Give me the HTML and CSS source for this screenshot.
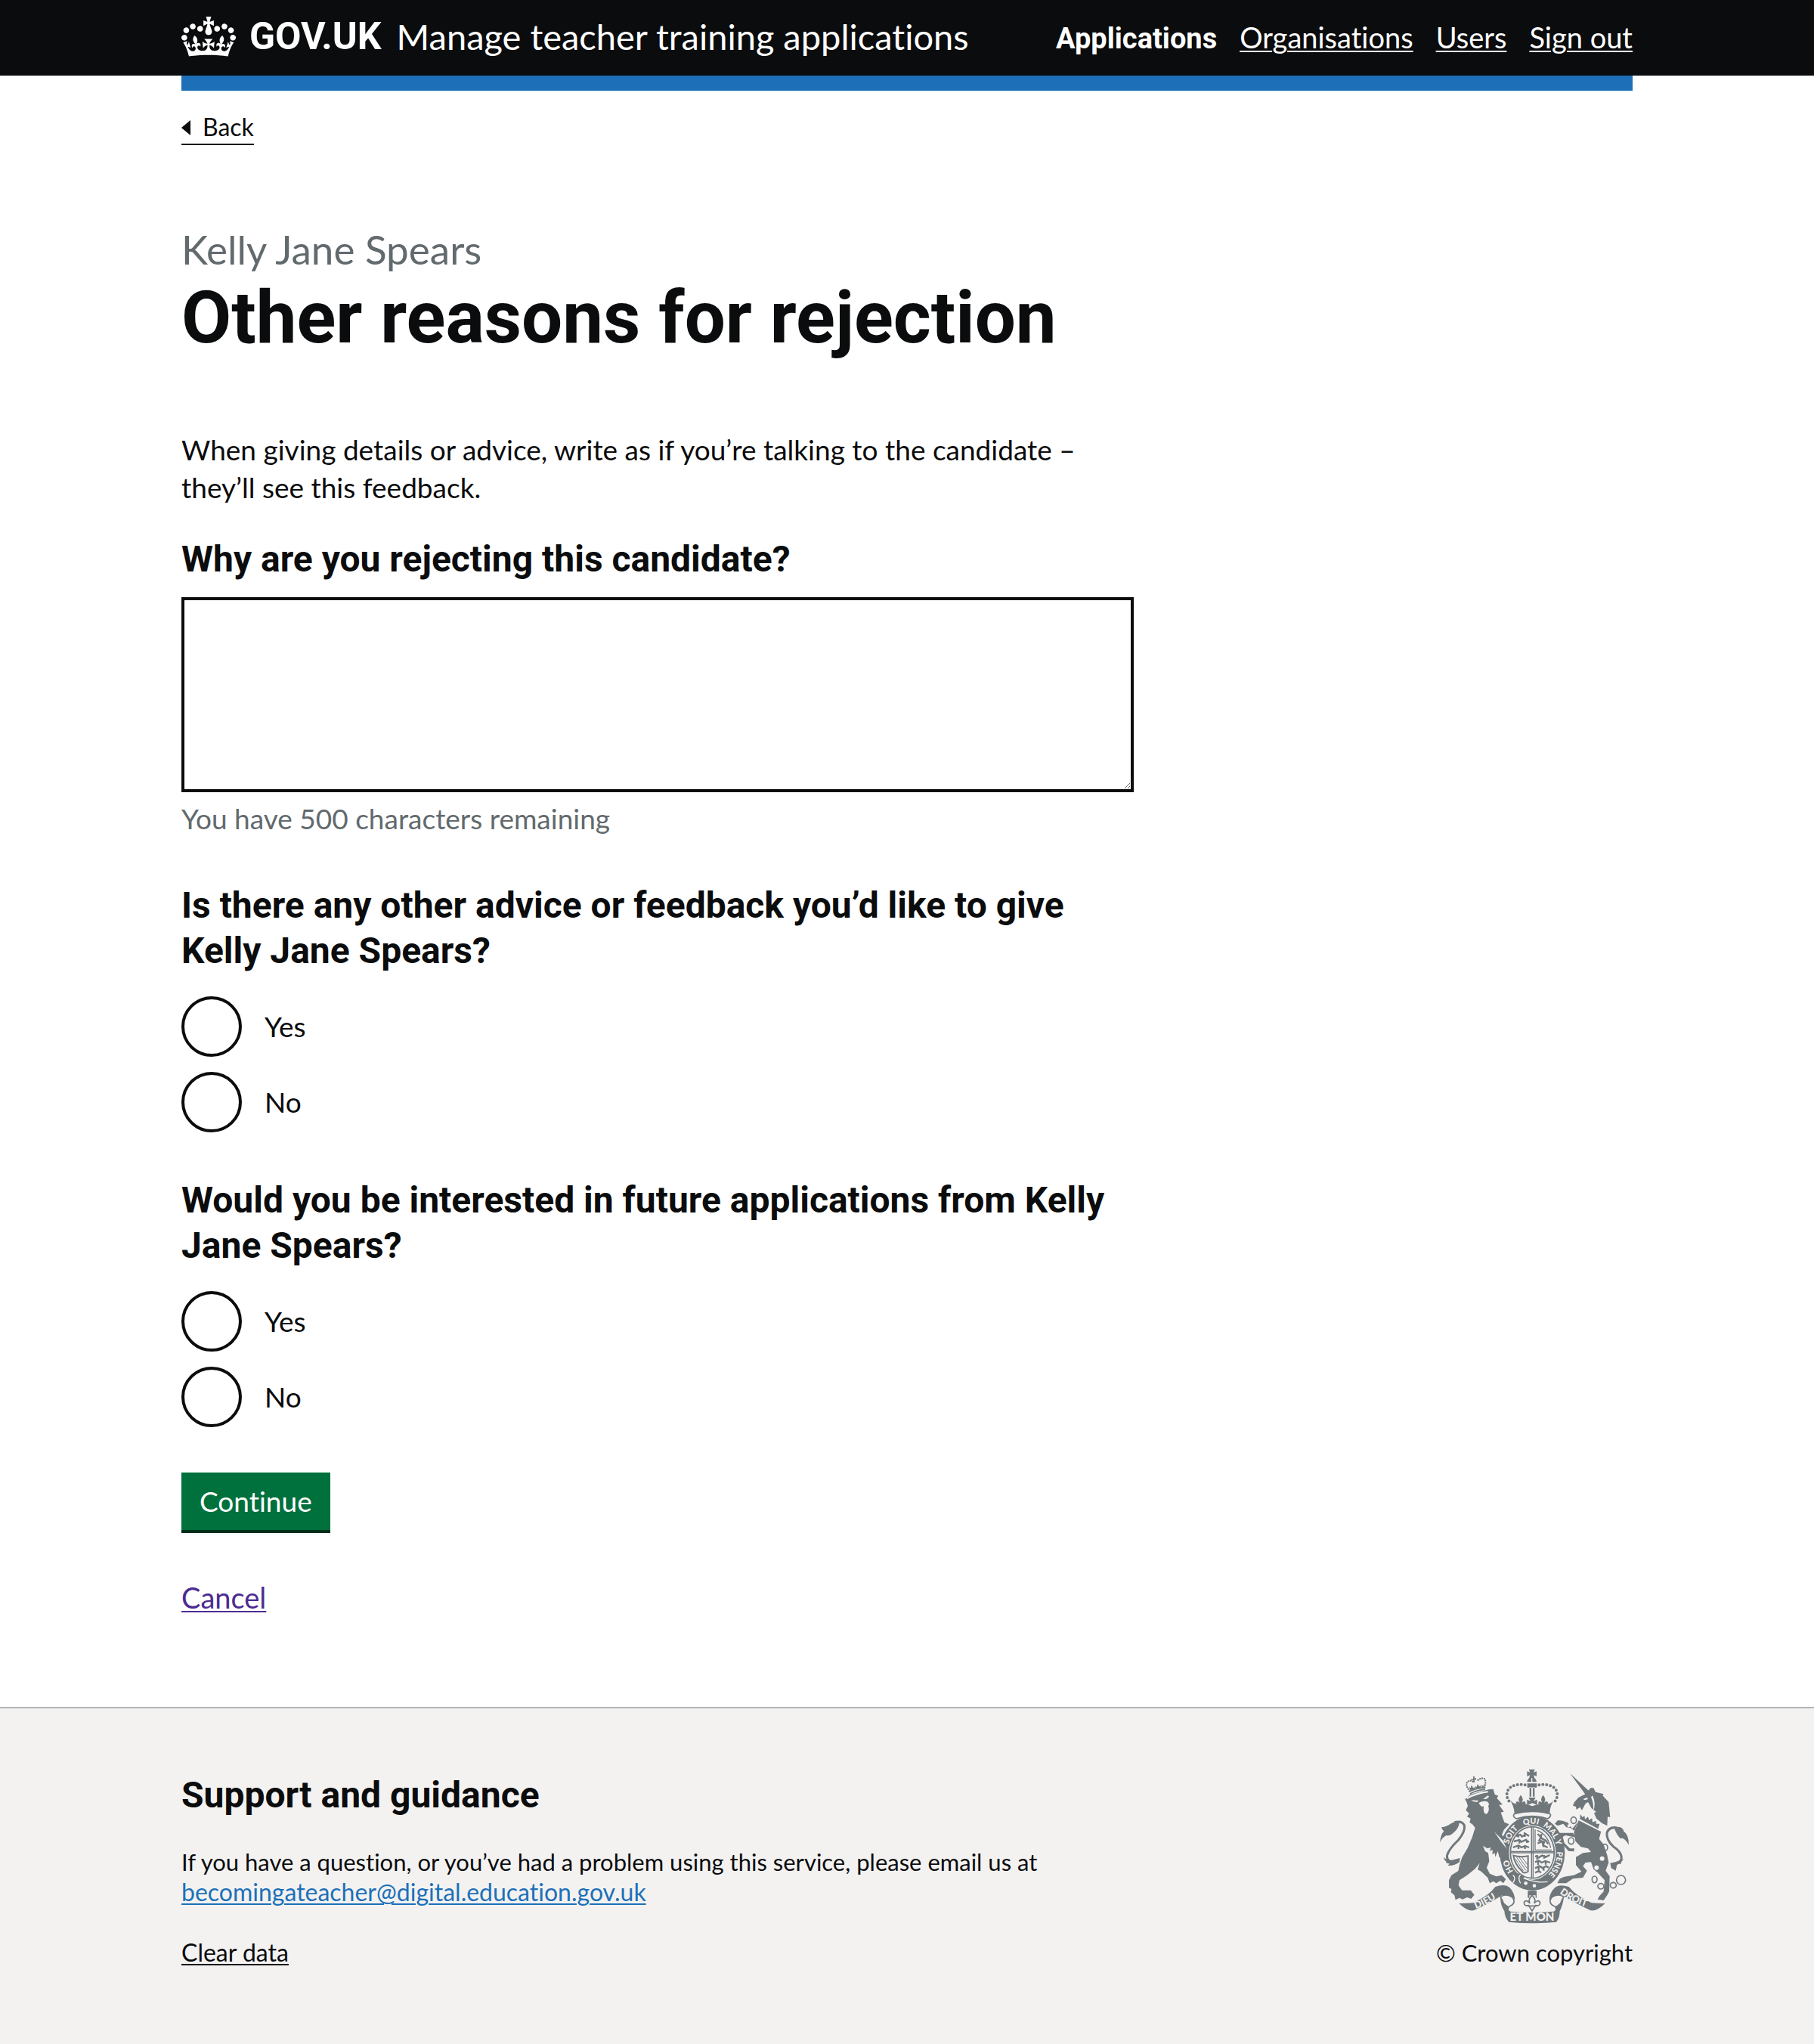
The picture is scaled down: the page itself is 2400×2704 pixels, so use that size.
FILE: index.html
```html
<!DOCTYPE html>
<html lang="en">
<head>
  <meta charset="utf-8">
  <meta name="viewport" content="width=device-width, initial-scale=1">
  <title>Other reasons for rejection - Manage teacher training applications - GOV.UK</title>
  <link rel="stylesheet" href="styles.css">
</head>
<body>
  <header class="header">
    <div class="container header-inner">
      <div class="brand">
        <a class="brand-logo" href="#">
          <svg class="brand-crown" viewBox="0 0 132 97" aria-hidden="true">
            <path fill="currentColor" fill-rule="evenodd" d="M25 30.2c3.5 1.5 7.7-.2 9.1-3.7 1.5-3.6-.2-7.8-3.9-9.2-3.6-1.4-7.6.3-9.1 3.9-1.4 3.5.3 7.5 3.9 9zM9 39.5c3.6 1.5 7.8-.2 9.2-3.7 1.5-3.6-.2-7.8-3.9-9.1-3.6-1.5-7.6.2-9.1 3.8-1.4 3.5.3 7.5 3.8 9zM4.4 57.2c3.5 1.5 7.7-.2 9.1-3.8 1.5-3.6-.2-7.7-3.9-9.1-3.5-1.5-7.6.3-9.1 3.8-1.4 3.5.3 7.6 3.9 9.1zm38.3-21.4c3.5 1.5 7.7-.2 9.1-3.8 1.5-3.6-.2-7.7-3.9-9.1-3.6-1.5-7.6.3-9.1 3.8-1.3 3.6.4 7.7 3.9 9.1zm64.4-5.6c-3.6 1.5-7.8-.2-9.1-3.7-1.5-3.6.2-7.8 3.8-9.2 3.6-1.4 7.7.3 9.2 3.9 1.3 3.5-.4 7.5-3.9 9zm15.9 9.3c-3.6 1.5-7.7-.2-9.1-3.7-1.5-3.6.2-7.8 3.7-9.1 3.6-1.5 7.7.2 9.2 3.8 1.5 3.5-.3 7.5-3.8 9zm4.7 17.7c-3.6 1.5-7.8-.2-9.2-3.8-1.5-3.6.2-7.7 3.9-9.1 3.6-1.5 7.7.3 9.2 3.8 1.3 3.5-.4 7.6-3.9 9.1zM89.3 35.8c-3.6 1.5-7.8-.2-9.2-3.8-1.4-3.6.2-7.7 3.9-9.1 3.6-1.5 7.7.3 9.2 3.8 1.4 3.6-.3 7.7-3.9 9.1zM69.7 17.7l8.9 4.7V9.3l-8.9 2.8c-.2-.3-.5-.6-.9-.9L72.4 0H59.6l3.5 11.2c-.3.3-.6.5-.9.9l-8.8-2.8v13.1l8.8-4.7c.3.3.6.7.9.9l-5 15.4v.1c-.2.8-.4 1.6-.4 2.4 0 4.1 3.1 7.5 7 8.1h.2c.3 0 .7.1 1 .1.4 0 .7 0 1-.1h.2c4-.6 7.1-4.1 7.1-8.1 0-.8-.1-1.7-.4-2.4V34l-5.1-15.4c.4-.2.7-.6 1-.9zM66 92.8c16.9 0 32.8 1.1 47.1 3.2 4-16.9 8.9-26.7 14-33.5l-9.6-3.4c1 4.9 1.1 7.2 0 10.2-1.5-1.4-3-4.3-4.2-8.7L108.6 76c2.8-2 5-3.2 7.5-3.3-4.4 9.4-10 11.9-13.6 11.2-4.3-.8-6.3-4.6-5.6-7.9 1-4.7 5.7-5.9 8-.5 4.3-8.7-3-11.4-7.6-8.8 7.1-7.2 7.9-13.5 2.1-21.1-8 6.1-8.1 12.3-4.5 20.8-4.7-5.4-12.1-2.5-9.5 6.2 3.4-5.2 7.9-2 7.2 3.1-.6 4.3-6.4 7.8-13.5 7.2-10.3-.9-10.9-8-11.2-13.8 2.5-.5 7.1 1.8 11 7.3L80.2 60c-4.1 4.4-8 5.3-12.3 5.4 1.4-4.4 8-11.6 8-11.6H55.5s6.4 7.2 7.9 11.6c-4.2-.1-8-1-12.3-5.4l1.4 16.4c3.9-5.5 8.5-7.7 10.9-7.3-.3 5.8-.9 12.8-11.1 13.8-7.2.6-12.9-2.9-13.5-7.2-.7-5 3.8-8.3 7.1-3.1 2.7-8.7-4.6-11.6-9.4-6.2 3.7-8.5 3.6-14.7-4.6-20.8-5.8 7.6-5 13.9 2.2 21.1-4.7-2.6-11.9.1-7.7 8.8 2.3-5.5 7.1-4.2 8.1.5.7 3.3-1.3 7.1-5.7 7.9-3.5.7-9-1.8-13.5-11.2 2.5.1 4.7 1.3 7.5 3.3l-4.7-15.4c-1.2 4.4-2.7 7.2-4.3 8.7-1.1-3-.9-5.3 0-10.2l-9.5 3.4c5 6.9 9.9 16.7 14 33.5 14.8-2.1 30.8-3.2 47.7-3.2z"/>
          </svg>
          <span class="brand-name">GOV.UK</span>
        </a>
        <a class="brand-service" href="#">Manage teacher training applications</a>
      </div>
      <nav class="nav" aria-label="Main">
        <a class="nav-link nav-link-current" href="#" aria-current="page">Applications</a>
        <a class="nav-link" href="#">Organisations</a>
        <a class="nav-link" href="#">Users</a>
        <a class="nav-link" href="#">Sign out</a>
      </nav>
    </div>
  </header>

  <div class="container">
    <div class="header-bar"></div>
    <a class="back-link" href="#">
      <svg class="back-arrow" viewBox="0 0 12 20" aria-hidden="true"><path fill="currentColor" d="M12 0v20L0 10z"/></svg>
      Back
    </a>

    <main class="main">
      <h1 class="title">
        <span class="title-caption">Kelly Jane Spears</span>
        Other reasons for rejection
      </h1>
      <p class="intro">When giving details or advice, write as if you’re talking to the candidate – they’ll see this feedback.</p>

      <form class="form">
        <div class="group">
          <label class="heading" for="reason">Why are you rejecting this candidate?</label>
          <textarea class="textarea" id="reason" name="reason" aria-describedby="reason-count"></textarea>
          <p class="hint" id="reason-count">You have 500 characters remaining</p>
        </div>

        <fieldset class="group">
          <legend class="heading heading-legend">Is there any other advice or feedback you’d like to give Kelly Jane Spears?</legend>
          <div class="radios">
            <div class="radio-item">
              <input class="radio" type="radio" id="advice-yes" name="advice" value="yes">
              <label class="radio-label" for="advice-yes">Yes</label>
            </div>
            <div class="radio-item">
              <input class="radio" type="radio" id="advice-no" name="advice" value="no">
              <label class="radio-label" for="advice-no">No</label>
            </div>
          </div>
        </fieldset>

        <fieldset class="group">
          <legend class="heading heading-legend">Would you be interested in future applications from Kelly Jane Spears?</legend>
          <div class="radios">
            <div class="radio-item">
              <input class="radio" type="radio" id="future-yes" name="future" value="yes">
              <label class="radio-label" for="future-yes">Yes</label>
            </div>
            <div class="radio-item">
              <input class="radio" type="radio" id="future-no" name="future" value="no">
              <label class="radio-label" for="future-no">No</label>
            </div>
          </div>
        </fieldset>

        <button class="button" type="button">Continue</button>
        <a class="cancel" href="#">Cancel</a>
      </form>
    </main>
  </div>

  <footer class="footer">
    <div class="container footer-inner">
      <div class="footer-support">
        <h2 class="heading footer-heading">Support and guidance</h2>
        <p class="footer-text">If you have a question, or you’ve had a problem using this service, please email us at <br><a class="footer-email" href="mailto:becomingateacher@digital.education.gov.uk">becomingateacher@digital.education.gov.uk</a></p>
        <a class="footer-clear" href="#">Clear data</a>
      </div>
      <a class="copyright" href="#">
        <svg class="crest" viewBox="69 58 756 615" aria-hidden="true">
          <defs>
            <path id="garter" d="M439 504A98 114 0 0 1 439 276A98 114 0 0 1 439 504"/>
            <path id="dieu" d="M212 615Q268 594 334 546"/>
            <path id="droit" d="M544 549Q606 597 690 616"/>
            <path id="fleur" d="M0-26Q14-10 4 4Q18-8 20 8L10 12H-10L-20 8Q-18-8-4 4Q-14-10 0-26z"/>
          </defs>
          <g class="crest-ink">
            <!-- lion -->
            <path d="M172 178L192 160L265 140L284 138L290 160L304 165L298 174L321 200L307 201L326 228L314 231L328 270L347 278L326 300L318 320L345 350L350 378L344 414L330 418L320 412L308 410L302 385L292 408L290 392L280 398L282 380L270 384L274 370L260 374L243 363L252 385L264 392L268 425L258 450L270 474L296 485L318 480L334 496L324 512L312 502L296 512L284 504L270 512L262 490L236 465L222 458L230 432L212 455L180 480L150 500L146 520L160 540L195 540L209 558L196 574L180 568L162 576L150 570L134 578L130 560L116 548L118 535L108 530L108 500L118 480L145 463L150 440L160 410L182 372L200 330L212 292L203 280L190 270L194 255L180 248L188 235L175 222L183 205L178 190z"/>
            <path d="M72 350Q76 315 88 306Q80 298 78 290Q102 286 114 276Q130 266 150 270Q146 295 128 310Q112 326 98 322Q82 330 72 350zM88 408Q96 420 120 420L152 412L150 428Q130 444 104 442L110 434Q92 432 98 426Q88 420 88 408z"/>
            <path class="crest-line" stroke-width="9" d="M130 270Q160 262 169 282Q174 305 146 340Q108 376 101 400Q98 416 110 424"/>
            <path class="crest-line" stroke-width="5" d="M192 157Q218 142 252 140M188 149Q216 134 252 133"/>
            <path class="crest-line crest-beads-small" d="M190 146Q172 122 180 112Q192 98 206 112M250 132Q256 108 250 98Q236 90 220 106"/>
            <path d="M204 88h6l-1 8 7-2v8l-7-1 2 10h-8l1-9-7 3v-8l7 2zM192 144l-4-14 6 4 4-12 6 12 6-4 2 12zM214 138l-2-12 6 4 4-12 6 10 6-4 2 12zM238 134v-12l6 4 4-8v16z"/>
            <!-- unicorn -->
            <path d="M588 75L670 152L650 160zM650 158L670 134L682 134L690 150L722 158L718 164L742 190L748 250L738 248L736 284L716 274L694 256L684 234L692 228L674 215L660 190L650 196L636 222L628 210L614 220L612 208L600 204L606 190L622 172z"/>
            <path d="M624 260L712 306L704 336L722 358L736 400L742 430L730 462L746 484L744 545L736 560L722 580L698 576L706 562L722 545L726 500L698 470L682 456L672 428L650 430L640 444L656 462L640 490L600 494L574 512L538 512L548 494L566 486L604 480L634 466L612 440L612 408L640 392L672 388L660 374L632 368L610 345L604 310z"/>
            <path d="M618 270L606 304L590 292L574 290L562 276L540 284L528 276L540 262L560 264L580 272L598 296zM612 330L570 322L560 328L566 352L588 374L606 374L604 386L582 384L562 360L546 322L540 312L600 312z"/>
            <path d="M822 360Q804 328 788 334Q772 318 764 292L784 288Q800 292 802 306Q822 318 822 360zM802 416Q790 428 790 436L776 434L770 462L752 452L748 432L768 428z"/>
            <path class="crest-line" stroke-width="9" d="M776 292Q744 286 735 312Q732 340 760 366Q792 386 793 410Q794 424 766 440"/>
            <!-- crown -->
            <path d="M425 60h24l-5 12 12-4v20l-12-5 4 12H426l4-12-12 5V68l12 4zM418 110Q420 94 435 92V110zM439 92Q454 94 456 110H439zM418 116H458Q456 132 438 132T418 116z"/>
            <path class="crest-line crest-beads" d="M424 127C396 112 338 120 338 160Q338 178 350 190M452 127C480 112 538 120 538 160Q538 178 526 190"/>
            <path d="M428 134h7v34h-7zM441 134h7v34h-7zM424 172H452L444 186L458 180V202L440 194L418 202V180L432 186z"/>
            <path d="M350 182Q366 200 382 198L376 190Q394 200 400 196Q412 196 438 206Q466 196 480 196L500 190L494 198Q514 198 524 182Q508 210 508 234Q440 222 368 234Q366 205 350 182z"/>
            <use href="#fleur" x="393" y="188"/><use href="#fleur" x="482" y="188"/>
            <!-- garter and shield -->
            <ellipse cx="439" cy="392" rx="129" ry="148"/>
            <path class="crest-pale" stroke-width="5" d="M368 236Q438 218 508 236Q518 244 500 256Q438 236 376 256Q358 248 368 236z"/>
            <ellipse class="crest-cut" cx="439" cy="390" rx="93" ry="108"/>
            <ellipse class="crest-line" stroke-width="5" cx="439" cy="390" rx="87" ry="102"/>
            <path class="crest-line" stroke-width="4" d="M436 288V490M442 288V490M352 386H526M352 391H526M450 298V380H516M458 302Q500 318 512 372"/>
            <path class="crest-line" stroke-width="7" d="M374 324l18-5 6 8 16-10 12 8M366 346l22-6 8 8 16-8 14 8M362 370l22-8 12 8 14-6 16 6M380 312l4 18M408 310l2 18M388 338v16M414 336l4 16M384 360v16M410 362v14M460 316l14 14-8 12 20 6-4 14 18 8M476 316l-4 16 20 10 10 14M460 354l18-8 6 22M450 404l14 6 14-8 14 6 16-8M450 428l14-6 12 8 14-6 20 6M450 452l18-8 12 8 14-8 10 6M450 470l14-6 10 6M458 400v18M486 400v14M462 424v16M492 424v14M464 446v16M484 446v16"/>
            <path class="crest-line" stroke-width="6" d="M364 402Q390 410 422 404V466Q404 476 398 464Q368 436 364 402z"/>
            <path class="crest-line" stroke-width="3" d="M376 408L414 462M386 408L418 452M397 408L420 438M372 416L404 464"/>
            <path d="M362 482Q374 468 390 476Q408 480 408 496Q450 512 508 514Q468 548 414 536L392 512Q374 526 364 508Q374 500 362 482z"/>
            <path class="crest-line crest-line-cut" stroke-width="4" d="M362 480Q376 490 362 510M392 478Q380 490 392 512M404 492Q450 512 500 506"/>
            <circle class="crest-cut" cx="413" cy="512" r="7"/><circle class="crest-cut" cx="447" cy="522" r="7"/>
            <!-- pendant -->
            <path d="M421 542H456V570H452V560H427V570H421z"/>
            <path class="crest-line" stroke-width="5" d="M438 560Q456 578 446 592Q462 574 470 588Q470 604 452 600L438 622L424 600Q406 604 406 588Q414 574 430 592Q420 578 438 560zM420 602H456"/>
            <!-- ribbon -->
            <path d="M148 592Q178 592 204 590Q268 560 292 526Q330 512 350 530Q368 550 370 578Q350 556 318 560Q270 592 206 620Q180 624 148 592zM728 592Q700 592 674 590Q610 560 584 526Q546 514 528 530Q508 550 506 578Q530 556 560 560Q610 592 670 620Q696 624 728 592z"/>
            <path class="crest-pale" stroke-width="5" d="M312 566Q336 550 360 568Q376 590 352 602Q334 610 340 624L328 616Q328 590 312 566zM564 566Q540 550 516 568Q500 590 524 602Q542 610 536 624L548 616Q548 590 564 566z"/>
            <path d="M312 568Q320 590 348 606Q340 620 352 624Q438 632 524 624Q536 620 528 606Q556 590 564 568Q560 600 548 622Q548 650 534 666Q438 676 346 666Q330 650 328 622Q312 600 312 568z"/>
            <!-- chain -->
            <path class="crest-line" stroke-width="5" d="M592 262a11 13 0 1 0 22 0a11 13 0 1 0-22 0M582 344a11 13 0 1 0 22 0a11 13 0 1 0-22 0M714 370a12 13 0 1 0 24 0a12 13 0 1 0-24 0M676 497a10 13 0 1 0 20 0a10 13 0 1 0-20 0M699 524a12 11 0 1 0 24 0a12 11 0 1 0-24 0M748 520a12 11 0 1 0 24 0a12 11 0 1 0-24 0M773 499a18 18 0 1 0 36 0a18 18 0 1 0-36 0"/>
          </g>
          <g class="crest-cut">
            <path d="M196 182L226 184L220 190L206 188zM244 178L262 164L268 168L256 178zM226 194Q240 182 260 188Q272 200 264 204Q272 226 256 238Q242 234 246 206Q238 212 232 202zM176 172Q220 150 262 146L264 152Q220 158 180 178z"/>
            <path d="M640 178l16-6 4 6-12 4zM678 164Q694 200 680 226Q684 196 672 170z"/>
            <path d="M628 232L726 286L710 306L622 262z"/>
            <circle cx="716" cy="414" r="9"/><circle cx="694" cy="450" r="9"/><circle cx="584" cy="284" r="6"/>
            <path d="M288 308L322 342L338 376L314 346z"/>
          </g>
          <g class="crest-ink">
            <path d="M628 256l2-18 8 12 8-6 2 14 12-10 4 14 12-8 2 16 14-6 0 12 14 0-6 20-74-40z"/>
          </g>
          <g class="crest-text">
            <text font-size="32" text-anchor="middle"><textPath href="#garter" startOffset="113">HO</textPath></text>
            <text font-size="32" text-anchor="middle"><textPath href="#garter" startOffset="236">SOIT</textPath></text>
            <text font-size="32" text-anchor="middle"><textPath href="#garter" startOffset="328">QUI</textPath></text>
            <text font-size="32" text-anchor="middle"><textPath href="#garter" startOffset="424">MAL Y</textPath></text>
            <text font-size="32" text-anchor="middle"><textPath href="#garter" startOffset="546">PENSE</textPath></text>
            <text font-size="38"><textPath href="#dieu" startOffset="4">DIEU</textPath></text>
            <text font-size="38"><textPath href="#droit" startOffset="4">DROIT</textPath></text>
            <text font-size="45" text-anchor="middle" x="438" y="662">ET MON</text>
          </g>
        </svg>
        <span>© Crown copyright</span>
      </a>
    </div>
  </footer>
</body>
</html>
```
FILE: styles.css
```css
:root {
  --black: #0b0c0d;
  --blue: #1d70b8;
  --grey: #626a6e;
  --footer-grey: #f3f2f1;
  --crest: #6f777b;
  --bold-font: Roboto, "Liberation Sans", sans-serif;
}

* {
  box-sizing: border-box;
}

body {
  display: flex;
  flex-direction: column;
  min-height: 100vh;
  margin: 0;
  background: #fff;
  color: var(--black);
  font-family: Lato, "Liberation Sans", sans-serif;
  font-size: 37px;
  line-height: 50px;
  font-variant-ligatures: none;
}

a {
  color: inherit;
  text-decoration-thickness: 2px;
  text-underline-offset: 3px;
}

.container {
  width: 80%;
  max-width: 1920px;
  margin: 0 auto;
}

/* Header */
.header {
  background: var(--black);
  color: #fff;
}

.header-inner {
  display: flex;
  align-items: center;
  justify-content: space-between;
  min-height: 100px;
}

.brand {
  display: flex;
  align-items: center;
  gap: 20px;
  padding-bottom: 4px;
  line-height: 60px;
}

.brand-logo {
  display: flex;
  align-items: center;
  gap: 18px;
  text-decoration: none;
}

.brand-crown {
  width: 72px;
  height: 53px;
}

.brand-name {
  font: 700 50px/60px var(--bold-font);
}

.brand-service {
  font-size: 47px;
  text-decoration: none;
}

.nav {
  display: flex;
  align-items: baseline;
  gap: 30px;
  font-size: 38px;
}

.nav-link-current {
  font-family: var(--bold-font);
  font-weight: 700;
  text-decoration: none;
}

.header-bar {
  height: 20px;
  background: var(--blue);
}

/* Page content */
.back-link {
  display: inline-flex;
  align-items: center;
  gap: 16px;
  margin-top: 28px;
  padding-bottom: 2px;
  border-bottom: 2px solid;
  font-size: 32px;
  line-height: 40px;
  text-decoration: none;
}

.back-arrow {
  width: 12px;
  height: 20px;
  margin-top: 2px;
}

.main {
  max-width: 1260px;
  padding: 108px 0 120px;
}

.title {
  margin: 0 0 100px;
  font: 700 96px/100px var(--bold-font);
}

.title-caption {
  display: block;
  margin-bottom: 10px;
  color: var(--grey);
  font: 400 53px/60px Lato, "Liberation Sans", sans-serif;
}

.intro {
  margin: 0 0 40px;
}

.form {
  display: flex;
  flex-direction: column;
  align-items: flex-start;
  gap: 60px;
}

.group {
  width: 100%;
  min-width: 0;
  margin: 0;
  padding: 0;
  border: 0;
}

.heading {
  display: block;
  margin: 0 0 20px;
  padding: 0;
  font: 700 48px/60px var(--bold-font);
}

.heading-legend {
  margin-bottom: 30px;
}

.textarea {
  display: block;
  width: 100%;
  height: 258px;
  padding: 10px;
  border: 4px solid var(--black);
  border-radius: 0;
  font: inherit;
  resize: vertical;
}

.hint {
  margin: 10px 0 0;
  color: var(--grey);
}

.radios {
  display: flex;
  flex-direction: column;
  gap: 20px;
}

.radio-item {
  display: flex;
  align-items: center;
  gap: 30px;
}

.radio {
  width: 80px;
  height: 80px;
  margin: 0;
  border: 4px solid var(--black);
  border-radius: 50%;
  appearance: none;
}

.radio:checked {
  background: radial-gradient(var(--black) 20px, transparent 21px);
}

.button {
  margin: 0 0 4px;
  padding: 13px 24px;
  border: 0;
  background: #00703c;
  box-shadow: 0 4px 0 #002d18;
  color: #fff;
  font: inherit;
}

.cancel {
  color: #4c2c92;
  font-size: 38px;
}

/* Footer */
.footer {
  flex: 1;
  padding: 80px 0;
  border-top: 2px solid #b1b4b6;
  background: var(--footer-grey);
  font-size: 31px;
  line-height: 40px;
}

.footer-inner {
  display: flex;
  align-items: flex-end;
  justify-content: space-between;
}

.footer-heading {
  margin-bottom: 38px;
}

.footer-text {
  margin: 0 0 40px;
}

.footer-email {
  color: var(--blue);
  font-size: 32px;
}

.footer-clear {
  font-size: 32px;
}

.copyright {
  display: flex;
  flex-direction: column;
  align-items: center;
  gap: 18px;
  text-decoration: none;
}

.crest {
  width: 252px;
  height: 205px;
}

.crest-ink {
  fill: var(--crest);
}

.crest-line {
  fill: none;
  stroke: var(--crest);
}

.crest-beads {
  stroke-width: 12px;
  stroke-dasharray: 0 15;
  stroke-linecap: round;
}

.crest-beads-small {
  stroke-width: 7px;
  stroke-dasharray: 0 9;
  stroke-linecap: round;
}

.crest-line-cut {
  stroke: var(--footer-grey);
}

.crest-pale {
  fill: var(--footer-grey);
  stroke: var(--crest);
}

.crest-cut {
  fill: var(--footer-grey);
}

.crest-text {
  fill: var(--footer-grey);
  font-family: Lato, sans-serif;
  font-weight: 900;
}
```
